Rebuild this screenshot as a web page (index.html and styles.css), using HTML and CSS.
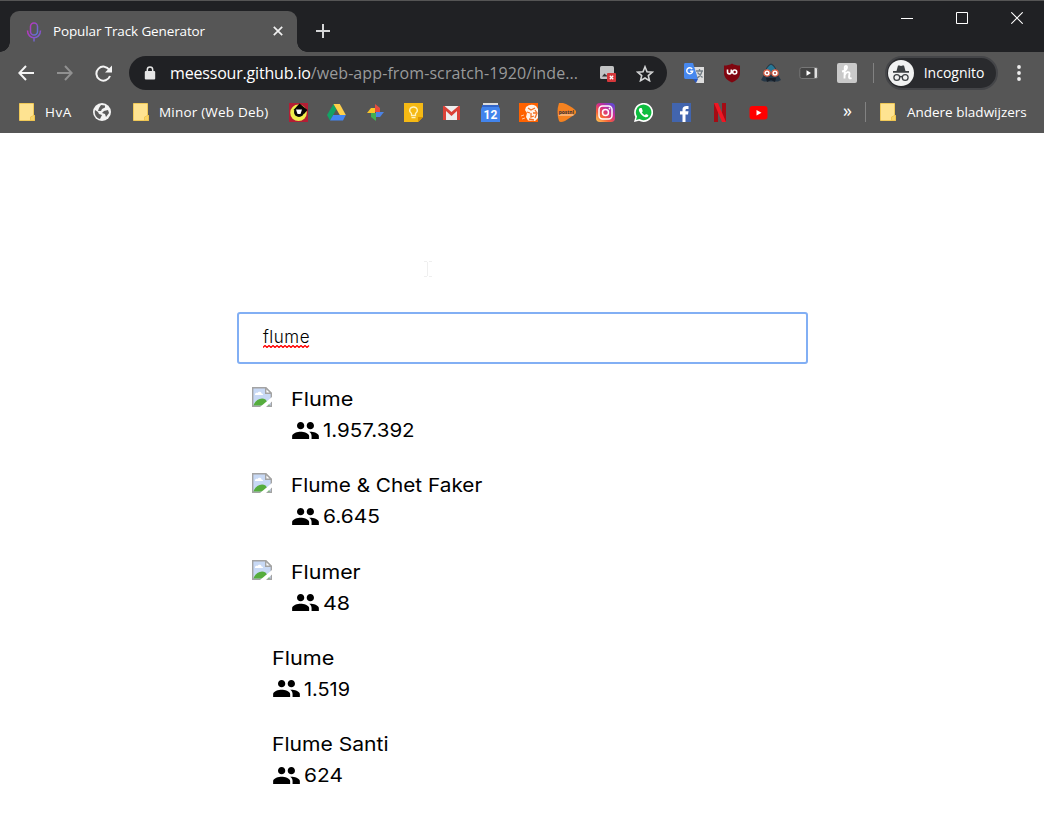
FILE: index.html
```html
<!DOCTYPE html>
<html lang="nl">
<head>
<meta charset="utf-8">
<title>Popular Track Generator</title>
<link rel="stylesheet" href="styles.css">
</head>
<body>
<svg class="defs" width="0" height="0">
  <defs>
    <symbol id="folder" viewBox="0 0 16 18"><path d="M.5.5h14v12h1v5H.5z" fill="#fee391" stroke="#f0c958"/><path d="M11.500 17.500v-3.500l3-1.500h1v5z" fill="#f8d568" stroke="#edc14b" stroke-width=".8"/></symbol>
    <symbol id="people" viewBox="1 5 22 14"><path d="M16 11c1.660 0 2.990-1.340 2.990-3S17.660 5 16 5s-3 1.340-3 3 1.340 3 3 3zm-8 0c1.660 0 2.990-1.340 2.990-3S9.660 5 8 5 5 6.340 5 8s1.340 3 3 3zm0 2c-2.330 0-7 1.170-7 3.500V19h14v-2.500c0-2.330-4.670-3.500-7-3.500zm8 0c-.29 0-.62.020-.97.050 1.160.84 1.970 1.970 1.970 3.450V19h6v-2.500c0-2.330-4.670-3.500-7-3.500z"/></symbol>
    <symbol id="broken" viewBox="0 0 20 20"><path d="M.7.7h13l5.600 5.600v13H.7z" fill="#c8d9f5" stroke="#a3a3a3" stroke-width="1.400"/><path d="M3 7.500c0-1.500 1.500-2 2.500-1.500 1-2 4-1.500 4 .5 1 0 1.500.5 1.500 1.500H3z" fill="#fff"/><path d="M1.400 18.600C3 13 9 10 13.500 12.500L18 18.600z" fill="#55ad3d"/><path d="M8 20 20 10v4.500L14 20z" fill="#fff"/><path d="M13.700.7v5.600h5.600z" fill="#fff" stroke="#a3a3a3" stroke-width="1.400"/></symbol>
    <linearGradient id="mic" x1="0" y1="0" x2="1" y2="1"><stop offset="0" stop-color="#bd35bd"/><stop offset=".55" stop-color="#8b50c8"/><stop offset="1" stop-color="#4b85d8"/></linearGradient>
    <linearGradient id="insta" x1="0" y1="1" x2=".8" y2="0"><stop offset="0" stop-color="#ffcf55"/><stop offset=".35" stop-color="#f56038"/><stop offset=".65" stop-color="#cf2c91"/><stop offset="1" stop-color="#6546d2"/></linearGradient>
  </defs>
</svg>

<header class="browser">
  <div class="tabstrip">
    <div class="tab">
      <svg width="16" height="20" viewBox="0 0 16 20" fill="none" stroke="url(#mic)" stroke-width="1.500"><rect x="4.500" y="1" width="7" height="12" rx="3.500"/><path d="M1.500 8.500c0 9.500 13 9.500 13 0M8 15.500V19.500"/></svg>
      <span class="tab-title">Popular Track Generator</span>
      <svg class="tab-close" width="10" height="10" viewBox="0 0 10 10"><path d="M.8.8l8.400 8.400M9.200.8.8 9.200" stroke="#f1f1f1" stroke-width="1.700"/></svg>
    </div>
    <svg class="new-tab" width="14" height="14" viewBox="0 0 14 14"><path d="M7 0v14M0 7h14" stroke="#d5d6d7" stroke-width="2"/></svg>
    <div class="window-controls">
      <svg width="12" height="12" viewBox="0 0 12 12"><path d="M0 6.500h12" stroke="#fff"/></svg>
      <svg width="12" height="12" viewBox="0 0 12 12"><path d="M.5.5h11v11H.5z" fill="none" stroke="#fff"/></svg>
      <svg width="12" height="12" viewBox="0 0 12 12"><path d="M.3.3l11.400 11.400M11.700.3.3 11.700" stroke="#fff" stroke-width="1.100"/></svg>
    </div>
  </div>

  <div class="toolbar">
    <nav class="nav-buttons">
      <svg width="16" height="16" viewBox="0 0 16 16" fill="none" stroke="#f4f4f4" stroke-width="2"><path d="M16 8H1.500M8 1 1.300 8 8 15"/></svg>
      <svg width="16" height="16" viewBox="0 0 16 16" fill="none" stroke="#919191" stroke-width="2"><path d="M0 8h14.500M8 1l6.700 7L8 15"/></svg>
      <svg width="17" height="17" viewBox="0 0 17 17"><path d="M14.400 5A7 7 0 1 0 15 11" fill="none" stroke="#f4f4f4" stroke-width="2"/><path d="M17 .5v7H10z" fill="#f4f4f4"/></svg>
    </nav>
    <div class="omnibox">
      <svg class="lock" width="12" height="14" viewBox="0 0 12 14"><rect x=".8" y="5" width="10.400" height="8.500" rx="1" fill="#e6e6e6"/><path d="M3.300 6V3.800a2.700 2.700 0 0 1 5.400 0V6" fill="none" stroke="#e6e6e6" stroke-width="1.500"/></svg>
      <span class="url"><span class="host">meessour.github.io</span>/web-app-from-scratch-1920/inde...</span>
      <svg class="blocked" width="17" height="17" viewBox="0 0 17 17"><rect x="1" y="1" width="14" height="13" rx="1.500" fill="#c2c3c4"/><path d="M3 11.500l2.500-3 2 2L9 9v2.500z" fill="#333"/><rect x="8" y="8" width="9" height="9" rx="1" fill="#d6373a"/><path d="M10.800 10.800l3.400 3.400M14.200 10.800l-3.400 3.400" stroke="#fff" stroke-width="1.300"/></svg>
      <svg class="star" width="18" height="17" viewBox="0 0 18 17"><path d="M9 1.800l2 4.900 5.300.4-4 3.500 1.200 5.100L9 13l-4.500 2.700 1.200-5.100-4-3.500 5.300-.4z" fill="none" stroke="#d3d4d5" stroke-width="1.600"/></svg>
    </div>
    <div class="extensions">
      <svg width="20" height="20" viewBox="0 0 20 20"><path d="M9 4h11v16H12z" fill="#dedede"/><path d="M1 0h8l5 16H1.500Q0 16 0 14V1.500Q0 0 1 0z" fill="#4788ee"/><path d="M9 16h5l-2 4z" fill="#2955bd"/><path d="M12 8h7M15.500 6v2M18 8c-1 4-3 6-5 7M13.500 9.500l5 5" stroke="#737e86" stroke-width="1.300" fill="none"/><path d="M8.200 6a3 3 0 1 0 .5 2.300H6.200" fill="none" stroke="#fff" stroke-width="1.400"/></svg>
      <svg width="20" height="20" viewBox="0 0 20 20"><path d="M10 .5c2 1.500 5 2 8 2V10c0 5-4 7.500-8 9.500C6 17.500 2 15 2 10V2.500c3 0 6-.5 8-2z" fill="#800610"/><path d="M5.500 6.500V9a1.900 1.900 0 0 0 3.800 0V6.500" fill="none" stroke="#fff" stroke-width="1.600"/><circle cx="12.700" cy="9" r="2" fill="none" stroke="#fff" stroke-width="1.600"/></svg>
      <svg width="20" height="20" viewBox="0 0 20 20"><path d="M10 .5c4 2 6 6 6.500 10.500l3.500 6-3 1.500H3L0 17l3.500-6C4 6.500 6 2.500 10 .5z" fill="#253746"/><path d="M10 1.500C6 4 5 7 5 9h10c0-3-2-5.500-5-7.500z" fill="#287795"/><path d="M5 15h10l-1 4-4-2-4 2z" fill="#171f29"/><circle cx="6" cy="10" r="3.200" fill="#fff" stroke="#d9593d" stroke-width="1.200"/><circle cx="14" cy="10" r="3.200" fill="#fff" stroke="#d9593d" stroke-width="1.200"/><circle cx="6" cy="10" r="1" fill="#a33f3a"/><circle cx="14" cy="10" r="1" fill="#a33f3a"/></svg>
      <svg width="20" height="20" viewBox="0 0 20 20"><rect x=".8" y="4.500" width="18" height="11" rx="2" fill="#454545" stroke="#777"/><path d="M7.500 7.300l4.500 2.700-4.500 2.700z" fill="#fff"/><path d="M15.500 5H17q1 0 1 1v8q0 1-1 1h-1.500z" fill="#e1e1e1"/></svg>
      <svg width="20" height="20" viewBox="0 0 20 20"><rect width="20" height="20" rx="2" fill="#c9c9c9"/><path d="M5 8.500c3-.5 5-2.500 5-4.500 0-1.500-2-1.500-2.200 0L7.500 15.500M7.800 12c1-3 4.700-4 4.700-1.500l-.5 3.500q0 2 2.500 1" fill="none" stroke="#fff" stroke-width="1.900"/></svg>
    </div>
    <span class="divider"></span>
    <div class="chip">
      <svg width="26" height="26" viewBox="0 0 26 26"><circle cx="13" cy="13" r="13" fill="#f1f2f2"/><path d="M8.500 11 10 5.500h1.500l1.500.5 1.500-.5H16l1.500 5.500zM5 11h16v1.700H5z" fill="#3c4043"/><g fill="none" stroke="#3c4043" stroke-width="1.300"><circle cx="8.800" cy="17.500" r="2.900"/><circle cx="17.200" cy="17.500" r="2.900"/><path d="M11.700 17q1.300-1 2.600 0"/></g></svg>
      <span class="chip-label">Incognito</span>
    </div>
    <svg class="menu" width="4" height="16" viewBox="0 0 4 16" fill="#eee"><circle cx="2" cy="2" r="1.900"/><circle cx="2" cy="8" r="1.900"/><circle cx="2" cy="14" r="1.900"/></svg>
  </div>

  <div class="bookmarks">
    <svg width="16" height="18"><use href="#folder"/></svg>
    <span class="bm-label hva">HvA</span>
    <svg class="globe" width="18" height="18" viewBox="0 0 18 18"><circle cx="9" cy="9" r="9" fill="#f2f2f2"/><path d="M2 7l3 2 1 2 3 1-2 4C3 15 1 11 2 7zM8 2l4 .5v2L9 6 8 8H5l1-3zM11 8l4-1 1 3-3 4-1-3-3-1z" fill="#5b5b5b"/></svg>
    <svg width="16" height="18"><use href="#folder"/></svg>
    <span class="bm-label minor">Minor (Web Deb)</span>
    <div class="shortcuts">
      <svg viewBox="0 0 19 19"><path d="M0 0h19v19H0z" fill="#b21e35"/><circle cx="9.500" cy="9.800" r="8.300" fill="#f0ef4b"/><path d="M10.500 .5 18.500 7 15 11 4.500 7z" fill="#050505"/><circle cx="10" cy="9" r="5" fill="#080808"/><path d="M7 6.500h6l-1.500 4.500h-3z" fill="#fff"/></svg>
      <svg viewBox="0 0 19 19"><path d="M6.500 1 0 12l3 5.500L9.500 6z" fill="#12a265"/><path d="M6.500 1h6.300l6 11h-6z" fill="#ffd04b"/><path d="M6.200 12h12.600L16 17.500H3z" fill="#4285f4"/></svg>
      <svg viewBox="0 0 19 19"><path d="M9 9V1l5 4v4z" fill="#e84b3d"/><path d="M10 9h8l-4 5h-4z" fill="#4b83e6"/><path d="M10 10v8l-5-4v-4z" fill="#42ae53"/><path d="M9 10H1l4-5h4z" fill="#fac528"/></svg>
      <svg viewBox="0 0 19 19"><path d="M0 0h19v14l-5 5H0z" fill="#f5b914"/><path d="M14 19v-5h5z" fill="#d99300"/><path d="M7.500 12.500v-2C4 8 6 4 9.500 4s5.500 4 2 6.500v2zM7.500 14.700h4" fill="none" stroke="#fff2bd" stroke-width="1.300"/></svg>
      <svg viewBox="0 0 19 19"><path d="M1 3h17v14H1z" fill="#eee"/><path d="M1 17V3h1.500l7 6 7-6H18v14h-3V8l-5.500 5L4 8v9z" fill="#db4238"/></svg>
      <svg viewBox="0 0 19 19"><path d="M2 0h15v4H2z" fill="#ddd"/><path d="M1 2h17v8H1z" fill="#3365c8"/><path d="M0 6l1-2h17l1 2v13H0z" fill="#4284ec"/><text x="9.500" y="16" text-anchor="middle" class="cal-day">12</text></svg>
      <svg viewBox="0 0 19 19"><path d="M0 0h19v19H0z" fill="#ff6200"/><path d="M7 4q5-4 10-1l2 3v9l-3 3-7-.5-2-3.500 1-4-2-3z" fill="#fff3e9"/><path d="M9 5l3 2 4-2M8 9l3 1M14 10h3M12 10v4l3-1M10 16l5 1M16 7l2 3-2 5" fill="none" stroke="#f47022" stroke-width="1.300"/><path d="M2 13l3-1M3 16l3-1" stroke="#ffc6a0"/></svg>
      <svg viewBox="0 0 19 19"><path d="M2 0q2-1 7 1 8 4 10 7 1 2-2 4l-9 6q-5 2-6 0-3-9 0-18z" fill="#f58220"/><path d="M1.500 12h15" stroke="#fff" stroke-width=".7"/><text x="1.800" y="11" class="postnl">postnl</text></svg>
      <svg viewBox="0 0 19 19"><rect width="19" height="19" rx="4" fill="url(#insta)"/><g fill="none" stroke="#fff" stroke-width="1.500"><rect x="3" y="3" width="13" height="13" rx="3.500"/><circle cx="9.500" cy="9.500" r="3"/></g><circle cx="13.500" cy="5.500" r=".9" fill="#fff"/></svg>
      <svg viewBox="0 0 19 19"><path d="M0 19l1.300-5A9.500 9.500 0 1 1 5 17.700z" fill="#fff"/><path d="M2 17l1-3.500A7.800 7.800 0 1 1 5.500 16z" fill="#0ebd3f"/><path d="M6 5q-2 1-.5 4 2 4 6 5.200 3 .2 2.800-2.200l-2.300-1-1.200 1.300q-2-.8-3-3l1-1L7.700 5z" fill="#fff"/></svg>
      <svg viewBox="0 0 19 19"><path d="M0 0h19v19H0z" fill="#4265ae"/><path d="M10.500 19v-7.500H8V8.300h2.500V6.500c0-2.800 1.700-4 6-3.500v3H15c-1.500 0-1.500.5-1.500 2.300h3l-.5 3.200h-2.500V19z" fill="#fff"/></svg>
      <svg viewBox="0 0 19 19"><path d="M3 0h4v19H3zM11 0h4v19h-4z" fill="#a50b14"/><path d="M3 0h4l8 19h-4z" fill="#ee1724"/></svg>
      <svg viewBox="0 0 19 19"><rect x=".5" y="3" width="18" height="13.500" rx="3" fill="#f00"/><path d="M7.500 7v5.500l5-2.800z" fill="#fff"/></svg>
    </div>
    <span class="more">»</span>
    <span class="divider bm-divider"></span>
    <svg width="16" height="18"><use href="#folder"/></svg>
    <span class="bm-label other">Andere bladwijzers</span>
  </div>
</header>

<main class="page">
  <svg class="cursor" width="8" height="16" viewBox="0 0 8 16"><path d="M0 .5h3M5 .5h3M0 15.500h3M5 15.500h3M3.500 1v14" stroke="#efefef" fill="none"/></svg>
  <div class="search"><span class="query">flume</span><svg class="squiggle" width="47" height="3" viewBox="0 0 47 3"><path d="M0 2.500l2-2 2 2 2-2 2 2 2-2 2 2 2-2 2 2 2-2 2 2 2-2 2 2 2-2 2 2 2-2 2 2 2-2 2 2 2-2 2 2 2-2 2 2 2-2" fill="none" stroke="#f00" stroke-width="1.300"/></svg></div>
  <ul class="results">
    <li class="artist"><svg class="thumb" width="20" height="20"><use href="#broken"/></svg><div><div class="name n1">Flume</div><div class="followers"><svg width="27" height="17"><use href="#people"/></svg><span class="c1">1.957.392</span></div></div></li>
    <li class="artist"><svg class="thumb" width="20" height="20"><use href="#broken"/></svg><div><div class="name n2">Flume &amp; Chet Faker</div><div class="followers"><svg width="27" height="17"><use href="#people"/></svg><span class="c2">6.645</span></div></div></li>
    <li class="artist"><svg class="thumb" width="20" height="20"><use href="#broken"/></svg><div><div class="name n3">Flumer</div><div class="followers"><svg width="27" height="17"><use href="#people"/></svg><span class="c3">48</span></div></div></li>
    <li class="artist plain"><div><div class="name n1">Flume</div><div class="followers"><svg width="27" height="17"><use href="#people"/></svg><span class="c4">1.519</span></div></div></li>
    <li class="artist plain"><div><div class="name n5">Flume Santi</div><div class="followers"><svg width="27" height="17"><use href="#people"/></svg><span class="c5">624</span></div></div></li>
  </ul>
</main>
</body>
</html>
```

FILE: styles.css
```css
* { box-sizing: border-box; }
body { margin: 0; width: 1044px; height: 830px; overflow: hidden; background: #fff; font-family: "Open Sans", "Noto Sans", sans-serif; }
.defs { position: absolute; }
svg { display: block; flex: none; }
span { white-space: nowrap; }

.browser { height: 133px; background: #565656; color: #fff; }
.tabstrip { display: flex; align-items: flex-start; height: 52px; padding: 10px 0 0 10px; background: #202124; border-top: 1px solid #555; }
.tab { position: relative; display: flex; align-items: center; width: 287px; height: 41px; padding: 0 14px 0 16px; background: #565656; border-radius: 9px 9px 0 0; }
.tab::before, .tab::after { content: ""; position: absolute; bottom: 0; width: 10px; height: 10px; }
.tab::before { left: -10px; background: radial-gradient(circle at 0 0, #202124 9.500px, #565656 10px); }
.tab::after { right: -10px; background: radial-gradient(circle at 100% 0, #202124 9.500px, #565656 10px); }
.tab-title { margin: -2px 0 0 11px; font-size: 13.500px; letter-spacing: -.13px; }
.tab-close { margin: -1px 0 0 auto; }
.new-tab { margin: 13px 0 0 19px; }
.window-controls { display: flex; gap: 43px; margin: 1px 21px 0 auto; }

.toolbar { display: flex; align-items: center; height: 42px; padding-left: 18px; }
.nav-buttons { display: flex; align-items: center; gap: 22.500px; width: 111px; }
.omnibox { display: flex; align-items: center; width: 538px; height: 34px; padding-left: 16px; background: #202124; border-radius: 17px; }
.lock { margin-left: -1px; }
.url { width: 408px; margin-left: 14px; color: #999a9b; font-size: 16px; letter-spacing: .1px; line-height: 24px; }
.host { color: #fff; letter-spacing: -.18px; }
.blocked { margin-left: 21px; }
.star { margin-left: 20px; }
.extensions { display: flex; gap: 18.300px; margin-left: 17px; }
.divider { width: 1px; height: 20px; margin-left: 16px; background: #828282; }
.chip { display: flex; align-items: center; width: 113px; height: 34px; margin-left: 10.500px; padding-left: 1px; background: #292a2d; border: 2px solid #444548; border-radius: 17px; }
.chip-label { margin-left: 10px; font-size: 14px; line-height: 18px; }
.menu { margin-left: 19px; }

.bookmarks { display: flex; align-items: center; height: 36px; padding-left: 19px; font-size: 13.500px; }
.hva { width: 47px; padding-left: 10px; letter-spacing: .5px; }
.globe { margin: 0 22px 0 11px; }
.minor { width: 120px; padding-left: 10px; letter-spacing: .2px; }
.shortcuts { display: flex; gap: 19.330px; margin-left: 20px; }
.shortcuts svg { width: 19px; height: 19px; }
.cal-day { font: bold 12px Roboto, sans-serif; fill: #fff; }
.postnl { font: bold 4.800px "Open Sans", sans-serif; fill: #334; }
.more { width: 10px; margin: -5px 0 0 75px; font-size: 18px; }
.bm-divider { margin-left: 12px; }
.bm-divider + svg { margin-left: 14px; }
.other { margin-left: 11px; }

.page { position: relative; padding: 179px 0 0 237px; font-family: Inter, "Open Sans", sans-serif; color: #000; }
.cursor { position: absolute; left: 424px; top: 128px; }
.search { width: 571px; height: 52px; padding: 13px 24px 0; border: 2px solid #82aff4; border-radius: 3px; }
.query { display: block; height: 20px; font-size: 17px; font-weight: 300; letter-spacing: .5px; line-height: 20px; }
.squiggle { margin-top: -2px; }
.results { margin: 23px 0 0; padding: 0 0 0 15px; list-style: none; }
.artist { display: flex; gap: 19px; height: 86.250px; }
.plain { padding-left: 20px; }
.name { height: 25px; font-size: 19px; font-weight: 400; line-height: 25px; white-space: nowrap; transform-origin: 0 50%; }
.followers { display: flex; align-items: center; gap: 4.500px; height: 25px; margin: 6px 0 0 .5px; font-size: 19px; font-weight: 400; }
.followers svg { margin-top: -1px; }
.followers span { transform-origin: 0 50%; }

.n1 { transform: scaleX(1.14); }
.n2 { transform: scaleX(1.092); }
.n3 { transform: scaleX(1.125); }
.n5 { transform: scaleX(1.110); }
.c1 { transform: scaleX(1.080); }
.c2 { transform: scaleX(1.100); }
.c3 { transform: scaleX(1.130); }
.c4 { transform: scaleX(1.045); }
.c5 { transform: scaleX(1.100); }
```
